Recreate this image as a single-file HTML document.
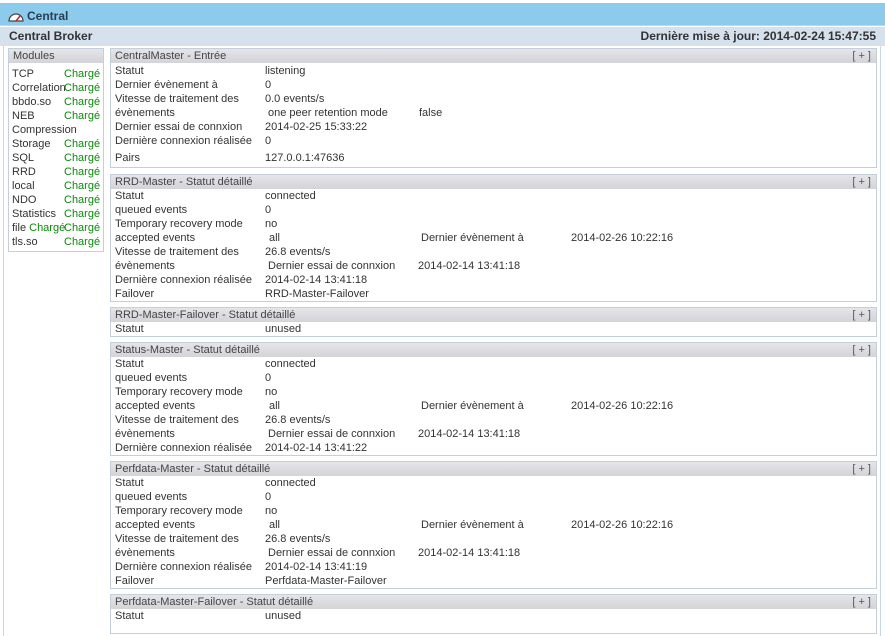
<!DOCTYPE html>
<html><head><meta charset="utf-8"><style>
*{margin:0;padding:0;box-sizing:border-box}
body{width:885px;height:627px;overflow:hidden;background:#fff;font-family:"Liberation Sans",Arial,sans-serif;font-size:11px;color:#333;position:relative}
.abs{position:absolute;white-space:nowrap}
#top{left:0;top:3px;width:885px;height:23px;background:#8ccbec;border-bottom:1px solid #b5d9ef}
#top span{position:absolute;left:27px;top:6px;font-size:12px;font-weight:bold;color:#2a3d52}
#bar{left:0;top:27px;width:885px;height:19px;background:#d5e1ec}
#frame{left:3px;top:46px;width:878px;height:590px;border-left:1px solid #c9d7e4;border-right:1px solid #c9d7e4}
.box{position:absolute;border:1px solid #c3cfdc;background:#fff}
.hd{height:14px;line-height:14px;background:linear-gradient(#e6e6e9,#d3d3d8);padding-left:4px;color:#444}
.pl{position:absolute;right:5px;top:0;color:#556}
.r{position:relative;height:14px;line-height:14px}
.r span{position:absolute;top:0;white-space:nowrap}
.g{color:#0a8a0a}
</style></head><body>
<div class="abs" id="top">
<svg style="position:absolute;left:8px;top:9px" width="16" height="10" viewBox="0 0 16 10"><path d="M1 9 A7 7 0 0 1 15 9 Z" fill="#fff" stroke="#444" stroke-width="1.2"/><path d="M8 9 L12 4" stroke="#c22" stroke-width="1.5"/></svg>
<span>Central</span></div>
<div class="abs" id="bar"><span style="position:absolute;left:9px;top:2px;font-size:12px;font-weight:bold;color:#333">Central Broker</span><span style="position:absolute;right:9px;top:2px;font-size:12px;font-weight:bold;color:#333">Dernière mise à jour: 2014-02-24 15:47:55</span></div>
<div class="abs" id="frame"></div>

<div class="box" style="left:8px;top:48px;width:96px;height:204px">
<div class="hd">Modules</div>
<div style="padding-top:4px">
<div class="r"><span style="left:3px">TCP</span><span class="g" style="left:55px">Chargé</span></div>
<div class="r"><span style="left:3px">Correlation</span><span class="g" style="left:55px">Chargé</span></div>
<div class="r"><span style="left:3px">bbdo.so</span><span class="g" style="left:55px">Chargé</span></div>
<div class="r"><span style="left:3px">NEB</span><span class="g" style="left:55px">Chargé</span></div>
<div class="r"><span style="left:3px">Compression</span></div>
<div class="r"><span style="left:3px">Storage</span><span class="g" style="left:55px">Chargé</span></div>
<div class="r"><span style="left:3px">SQL</span><span class="g" style="left:55px">Chargé</span></div>
<div class="r"><span style="left:3px">RRD</span><span class="g" style="left:55px">Chargé</span></div>
<div class="r"><span style="left:3px">local</span><span class="g" style="left:55px">Chargé</span></div>
<div class="r"><span style="left:3px">NDO</span><span class="g" style="left:55px">Chargé</span></div>
<div class="r"><span style="left:3px">Statistics</span><span class="g" style="left:55px">Chargé</span></div>
<div class="r"><span style="left:3px">file <span class="g" style="position:static">Chargé</span></span><span class="g" style="left:55px">Chargé</span></div>
<div class="r"><span style="left:3px">tls.so</span><span class="g" style="left:55px">Chargé</span></div>
</div></div>

<div class="box" style="left:110px;top:48px;width:767px;height:120px">
<div class="hd" style="position:relative">CentralMaster - Entrée<span class="pl">[ + ]</span></div>
<div style="padding-top:1px">
<div class="r"><span style="left:4px">Statut</span><span style="left:154px">listening</span></div>
<div class="r"><span style="left:4px">Dernier évènement à</span><span style="left:154px">0</span></div>
<div class="r"><span style="left:4px">Vitesse de traitement des</span><span style="left:154px">0.0 events/s</span></div>
<div class="r"><span style="left:4px">évènements</span><span style="left:157px">one peer retention mode</span><span style="left:308px">false</span></div>
<div class="r"><span style="left:4px">Dernier essai de connxion</span><span style="left:154px">2014-02-25 15:33:22</span></div>
<div class="r"><span style="left:4px">Dernière connexion réalisée</span><span style="left:154px">0</span></div>
<div class="r" style="height:20px;line-height:20px"><span style="left:4px">Pairs</span><span style="left:154px">127.0.0.1:47636</span></div>
</div></div>

<div class="box" style="left:110px;top:174px;width:767px;height:128px">
<div class="hd" style="position:relative">RRD-Master - Statut détaillé<span class="pl">[ + ]</span></div>
<div style="padding-top:0px">
<div class="r"><span style="left:4px">Statut</span><span style="left:154px">connected</span></div>
<div class="r"><span style="left:4px">queued events</span><span style="left:154px">0</span></div>
<div class="r"><span style="left:4px">Temporary recovery mode</span><span style="left:154px">no</span></div>
<div class="r"><span style="left:4px">accepted events</span><span style="left:158px">all</span><span style="left:310px">Dernier évènement à</span><span style="left:460px">2014-02-26 10:22:16</span></div>
<div class="r"><span style="left:4px">Vitesse de traitement des</span><span style="left:154px">26.8 events/s</span></div>
<div class="r"><span style="left:4px">évènements</span><span style="left:157px">Dernier essai de connxion</span><span style="left:307px">2014-02-14 13:41:18</span></div>
<div class="r"><span style="left:4px">Dernière connexion réalisée</span><span style="left:154px">2014-02-14 13:41:18</span></div>
<div class="r"><span style="left:4px">Failover</span><span style="left:154px">RRD-Master-Failover</span></div>
</div></div>

<div class="box" style="left:110px;top:307px;width:767px;height:30px">
<div class="hd" style="position:relative">RRD-Master-Failover - Statut détaillé<span class="pl">[ + ]</span></div>
<div class="r"><span style="left:4px">Statut</span><span style="left:154px">unused</span></div>
</div>

<div class="box" style="left:110px;top:342px;width:767px;height:114px">
<div class="hd" style="position:relative">Status-Master - Statut détaillé<span class="pl">[ + ]</span></div>
<div class="r"><span style="left:4px">Statut</span><span style="left:154px">connected</span></div>
<div class="r"><span style="left:4px">queued events</span><span style="left:154px">0</span></div>
<div class="r"><span style="left:4px">Temporary recovery mode</span><span style="left:154px">no</span></div>
<div class="r"><span style="left:4px">accepted events</span><span style="left:158px">all</span><span style="left:310px">Dernier évènement à</span><span style="left:460px">2014-02-26 10:22:16</span></div>
<div class="r"><span style="left:4px">Vitesse de traitement des</span><span style="left:154px">26.8 events/s</span></div>
<div class="r"><span style="left:4px">évènements</span><span style="left:157px">Dernier essai de connxion</span><span style="left:307px">2014-02-14 13:41:18</span></div>
<div class="r"><span style="left:4px">Dernière connexion réalisée</span><span style="left:154px">2014-02-14 13:41:22</span></div>
</div>

<div class="box" style="left:110px;top:461px;width:767px;height:128px">
<div class="hd" style="position:relative">Perfdata-Master - Statut détaillé<span class="pl">[ + ]</span></div>
<div class="r"><span style="left:4px">Statut</span><span style="left:154px">connected</span></div>
<div class="r"><span style="left:4px">queued events</span><span style="left:154px">0</span></div>
<div class="r"><span style="left:4px">Temporary recovery mode</span><span style="left:154px">no</span></div>
<div class="r"><span style="left:4px">accepted events</span><span style="left:158px">all</span><span style="left:310px">Dernier évènement à</span><span style="left:460px">2014-02-26 10:22:16</span></div>
<div class="r"><span style="left:4px">Vitesse de traitement des</span><span style="left:154px">26.8 events/s</span></div>
<div class="r"><span style="left:4px">évènements</span><span style="left:157px">Dernier essai de connxion</span><span style="left:307px">2014-02-14 13:41:18</span></div>
<div class="r"><span style="left:4px">Dernière connexion réalisée</span><span style="left:154px">2014-02-14 13:41:19</span></div>
<div class="r"><span style="left:4px">Failover</span><span style="left:154px">Perfdata-Master-Failover</span></div>
</div>

<div class="box" style="left:110px;top:594px;width:767px;height:40px">
<div class="hd" style="position:relative">Perfdata-Master-Failover - Statut détaillé<span class="pl">[ + ]</span></div>
<div class="r"><span style="left:4px">Statut</span><span style="left:154px">unused</span></div>
</div>
</body></html>
